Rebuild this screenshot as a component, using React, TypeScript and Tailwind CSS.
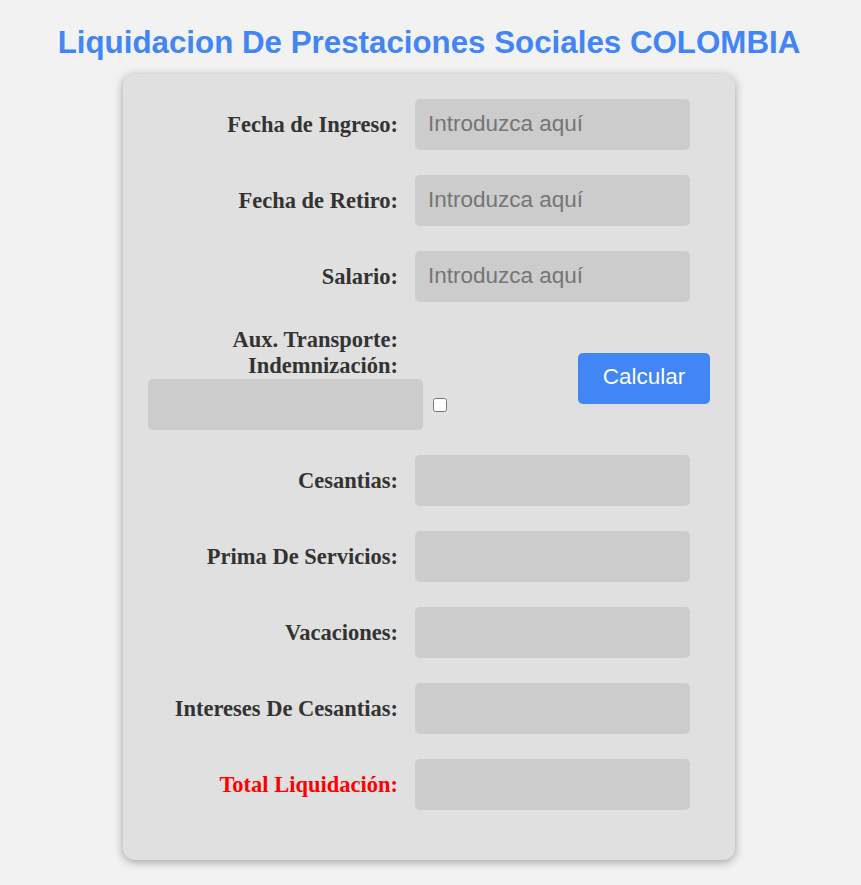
import React from "react";

const labelCls =
  "w-[250px] shrink-0 text-right font-['Liberation_Serif',serif] text-[22.5px] font-bold leading-[26px] text-[#333]";
const inputCls =
  "h-[51px] w-[275px] shrink-0 rounded-[5px] bg-[#cccccc] px-[13px] pb-[2px] font-['Liberation_Sans',Arial,sans-serif] text-[22.5px] text-[#333] outline-none placeholder:text-[#757575]";

type RowProps = {
  label: string;
  placeholder?: string;
  red?: boolean;
};

const Row = ({ label, placeholder, red }: RowProps) => (
  <div className="flex items-center">
    <label className={labelCls + (red ? " !text-[#ff0000]" : "")}>{label}</label>
    <input className={inputCls + " ml-[17px]"} placeholder={placeholder} readOnly={!placeholder} />
  </div>
);

export default function App() {
  return (
    <div className="min-h-screen w-full bg-[#f2f2f2] pb-[25px] pr-[3px] pt-[24px]">
      <h1 className="text-center font-['Liberation_Sans',Arial,sans-serif] text-[31.3px] font-bold leading-[38px] text-[#4285f4]">
        Liquidacion De Prestaciones Sociales COLOMBIA
      </h1>
      <div className="mx-auto mt-[12px] flex w-[612px] flex-col gap-[25px] rounded-[12px] bg-[#e0e0e0] px-[25px] pb-[50px] pt-[25px] shadow-[0_2px_10px_rgba(0,0,0,0.35)]">
        <Row label="Fecha de Ingreso:" placeholder="Introduzca aquí" />
        <Row label="Fecha de Retiro:" placeholder="Introduzca aquí" />
        <Row label="Salario:" placeholder="Introduzca aquí" />

        <div className="flex items-center">
          <div className="flex flex-col">
            <span className={labelCls}>Aux. Transporte:</span>
            <span className={labelCls}>Indemnización:</span>
            <div className="flex items-center">
              <input className={inputCls} readOnly />
              <input type="checkbox" className="ml-[10px] h-[14px] w-[14px]" />
            </div>
          </div>
          <button className="ml-[131px] h-[51px] w-[132px] rounded-[5px] bg-[#4285f4] pb-[3px] font-['Liberation_Sans',Arial,sans-serif] text-[22.5px] text-white">
            Calcular
          </button>
        </div>

        <Row label="Cesantias:" />
        <Row label="Prima De Servicios:" />
        <Row label="Vacaciones:" />
        <Row label="Intereses De Cesantias:" />
        <Row label="Total Liquidación:" red />
      </div>
    </div>
  );
}
